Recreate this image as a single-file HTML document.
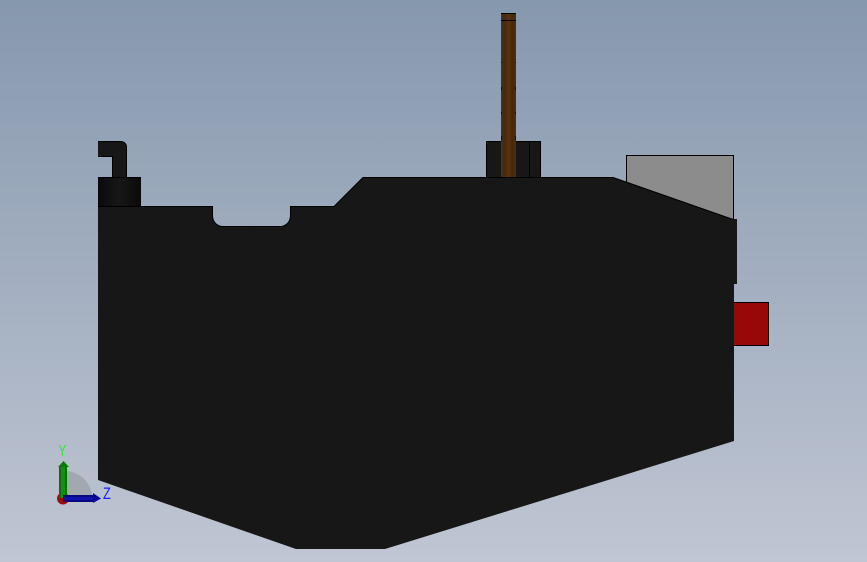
<!DOCTYPE html>
<html>
<head>
<meta charset="utf-8">
<style>
html,body{margin:0;padding:0;width:867px;height:562px;overflow:hidden}
svg{display:block}
</style>
</head>
<body>
<svg width="867" height="562" viewBox="0 0 867 562" xmlns="http://www.w3.org/2000/svg">
<defs>
<linearGradient id="bg" x1="0" y1="0" x2="0" y2="1">
<stop offset="0" stop-color="#8698ae"/>
<stop offset="1" stop-color="#c0c6d3"/>
</linearGradient>
<linearGradient id="pin" x1="0" y1="0" x2="1" y2="0">
<stop offset="0" stop-color="#4e3418"/>
<stop offset="0.2" stop-color="#47280a"/>
<stop offset="0.55" stop-color="#5a3210"/>
<stop offset="0.75" stop-color="#44280c"/>
<stop offset="1" stop-color="#4a3016"/>
</linearGradient>
<linearGradient id="blk" x1="0" y1="0" x2="1" y2="0">
<stop offset="0" stop-color="#0a0a0a"/>
<stop offset="0.5" stop-color="#171717"/>
<stop offset="1" stop-color="#0a0a0a"/>
</linearGradient>
</defs>
<rect width="867" height="562" fill="url(#bg)"/>

<!-- gray block -->
<rect x="626.500" y="155.500" width="107" height="70" fill="#8c8c8c" stroke="#000" stroke-width="1"/>
<!-- red block -->
<rect x="733.500" y="302.500" width="35" height="43" fill="#990808" stroke="#000" stroke-width="1"/>

<!-- pin base -->
<rect x="486.500" y="141.500" width="54" height="37" fill="#171717" stroke="#000" stroke-width="1"/>
<line x1="529.500" y1="141" x2="529.500" y2="178" stroke="#000" stroke-width="1"/>

<!-- brown pin -->
<rect x="501" y="13" width="15" height="165" fill="url(#pin)"/>
<rect x="501" y="13" width="15" height="1" fill="#000"/>
<rect x="501" y="20" width="15" height="1" fill="#000"/>
<rect x="501" y="62" width="1" height="1" fill="#111"/>
<rect x="515" y="62" width="1" height="1" fill="#111"/>
<rect x="501" y="87" width="1" height="3" fill="#111"/>
<rect x="515" y="87" width="1" height="3" fill="#111"/>
<rect x="501" y="112" width="1" height="2" fill="#111"/>
<rect x="515" y="112" width="1" height="2" fill="#111"/>
<rect x="501" y="136" width="1" height="4" fill="#111"/>
<rect x="515" y="136" width="1" height="4" fill="#111"/>

<!-- left hook -->
<path d="M98 141H121A6 6 0 0 1 127 147V178H112V157H98Z" fill="#000"/>
<path d="M98 142H121A5 5 0 0 1 126 147V178H113V156H98Z" fill="#171717"/>
<!-- left block -->
<rect x="98" y="177" width="43" height="30" fill="url(#blk)"/>
<rect x="98" y="177" width="43" height="1" fill="#000"/>

<!-- main body -->
<path d="M98 206H213V216A11 11 0 0 0 224 227H279A11 11 0 0 0 290 216V206H334L363 177H613L733 219H737V284H734V441L385 549H296L98 480Z" fill="#171717"/>
<path d="M98 206.500H212.500V216A10.500 10.500 0 0 0 224 226.500H279A10.500 10.500 0 0 0 290.500 216V206.500H334L363 177.500H613L733 219.500" fill="none" stroke="#000" stroke-width="1"/>

<!-- triad -->
<path d="M66 471A27 27 0 0 1 92 498H66Z" fill="#a3a7b0"/>
<circle cx="63" cy="498.500" r="6" fill="#a00c0c"/>
<rect x="59" y="466" width="8" height="32" fill="#0b700b"/>
<rect x="61" y="466" width="4" height="32" fill="#129012"/>
<path d="M58 467L63.500 461L69 467Z" fill="#0a7a0a"/>
<rect x="63" y="495" width="31" height="7" fill="#08087a"/>
<rect x="63" y="497" width="31" height="3" fill="#1010b0"/>
<path d="M93 493L101 498.500L93 503Z" fill="#0a0a90"/>
<text transform="translate(58.500 456) scale(.72 1)" font-family="'Liberation Sans',sans-serif" font-size="16" fill="#2ee82e">Y</text>
<text transform="translate(103 499) scale(.75 1)" font-family="'Liberation Sans',sans-serif" font-size="17" fill="#1a1aff">Z</text>
</svg>
</body>
</html>
